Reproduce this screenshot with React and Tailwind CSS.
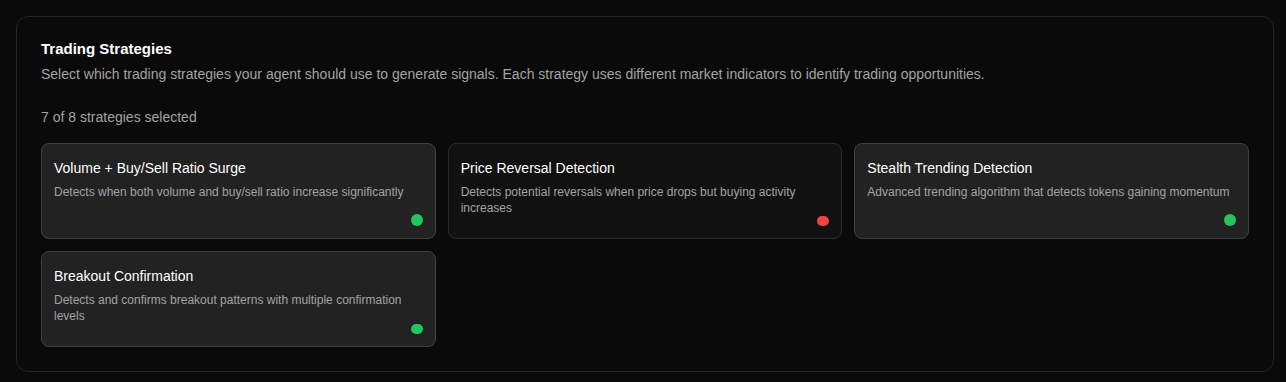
import React from "react";

const strategies = [
  {
    id: "volume-ratio",
    name: "Volume + Buy/Sell Ratio Surge",
    description: "Detects when both volume and buy/sell ratio increase significantly",
    enabled: true,
  },
  {
    id: "price-reversal",
    name: "Price Reversal Detection",
    description: "Detects potential reversals when price drops but buying activity increases",
    enabled: false,
  },
  {
    id: "stealth-trending",
    name: "Stealth Trending Detection",
    description: "Advanced trending algorithm that detects tokens gaining momentum",
    enabled: true,
  },
  {
    id: "breakout",
    name: "Breakout Confirmation",
    description: "Detects and confirms breakout patterns with multiple confirmation levels",
    enabled: true,
  },
];

function StrategyCard({ strategy }) {
  return (
    <div
      className={
        strategy.enabled
          ? "flex flex-col h-[96px] rounded-lg border border-[#404040] bg-[#222222] px-3 pt-[14px] pb-3 cursor-pointer"
          : "flex flex-col h-[96px] rounded-lg border border-[#2a2a2a] bg-[#111111] px-3 pt-[14px] pb-3 cursor-pointer"
      }
    >
      <h3 className="text-sm leading-5 text-white">{strategy.name}</h3>
      <p className="mt-1.5 text-xs leading-4 text-[#a3a3a3]">
        {strategy.description}
      </p>
      {/* status dot sits at the bottom right */}
      <div
        className={
          strategy.enabled
            ? "mt-auto self-end w-3 h-3 rounded-full bg-[#22c55e]"
            : "mt-auto self-end w-3 h-3 rounded-full bg-[#ef4444]"
        }
      />
    </div>
  );
}

export default function App() {
  const selected = 7;
  const total = 8;

  return (
    <div
      className="min-h-screen bg-[#0a0a0a] pl-4 pr-3 pt-4 pb-2"
      style={{ fontFamily: '"Liberation Sans", Arial, sans-serif' }}
    >
      <div className="rounded-xl border border-[#262626] bg-[#0a0a0a] p-6">
        <h2 className="text-[15px] font-bold leading-none text-white">
          Trading Strategies
        </h2>
        <p className="mt-2 text-sm leading-5 text-[#a3a3a3]">
          Select which trading strategies your agent should use to generate signals. Each strategy uses different market indicators to identify trading opportunities.
        </p>

        <p className="mt-[23px] text-sm leading-5 text-[#a3a3a3]">
          {selected} of {total} strategies selected
        </p>

        <div className="mt-4 grid grid-cols-3 gap-3">
          {strategies.map((s) => (
            <StrategyCard key={s.id} strategy={s} />
          ))}
        </div>
      </div>
    </div>
  );
}
